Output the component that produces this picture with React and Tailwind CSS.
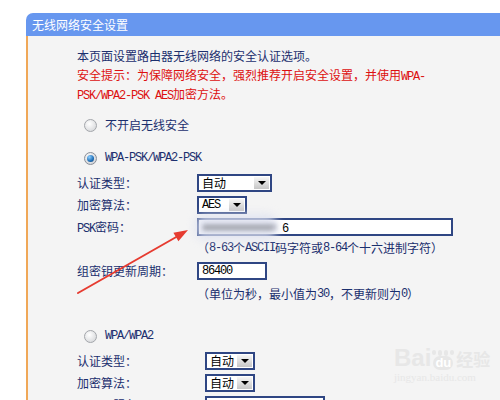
import React from 'react';

const Lat = ({ children }) => (
  <span className="font-['Liberation_Mono',monospace] text-[12px] leading-none tracking-[-1.2px]">{children}</span>
);

const Radio = ({ checked }) =>
  checked ? (
    <span className="flex h-[13px] w-[13px] items-center justify-center rounded-full border border-[#8a8f98] bg-[radial-gradient(circle_at_40%_35%,#ffffff,#c4c7cc)]">
      <span className="h-[7px] w-[7px] rounded-full bg-[radial-gradient(circle_at_35%_30%,#8fd0ff,#1f6fb8_60%,#0d3a6e)]" />
    </span>
  ) : (
    <span className="h-[13px] w-[13px] rounded-full border border-[#a3a6ab] bg-[radial-gradient(circle_at_40%_35%,#ffffff,#cfd1d4)]" />
  );

const Select = ({ value, w }) => (
  <div className={`flex h-[18px] border-2 border-[#2f4683] bg-white ${w}`}>
    <div className="flex flex-1 items-center pl-[3px] leading-[14px] text-black">{value}</div>
    <div className="m-px flex w-[15px] items-center justify-center bg-[linear-gradient(#f6f6f6,#c6c6c6)]">
      <div className="border-x-[4px] border-t-[4px] border-x-transparent border-t-black" />
    </div>
  </div>
);

const Row = ({ label, lw, children, className = '' }) => (
  <div className={`flex h-[22px] items-center ${className}`}>
    <div className={lw}>{label}</div>
    {children}
  </div>
);

export default function App() {
  return (
    <div className="relative h-[400px] overflow-hidden bg-white pl-[26px] pt-[13px] font-['Noto_Sans_CJK_SC',sans-serif] text-[12px]">
      <div className="flex flex-col">
        <div className="h-[23px] rounded-tl-[7px] bg-[#6797ef] pl-[6px] leading-[23px] text-white">无线网络安全设置</div>
        <div className="h-[500px] border-l-2 border-[#f0a858] bg-[#f4f4f4] pl-[49px] pt-[10px] text-[#1b2f6e]">
          <div className="leading-[19px]">
            <div>本页面设置路由器无线网络的安全认证选项。</div>
            <div className="text-[#dd1010]">
              安全提示：为保障网络安全，强烈推荐开启安全设置，并使用<Lat>WPA-</Lat>
              <br />
              <Lat>PSK/WPA2-PSK AES</Lat>加密方法。
            </div>
          </div>

          <div className="mt-[11px] flex h-[22px] items-center gap-[8px] pl-[7px]">
            <Radio />
            <span>不开启无线安全</span>
          </div>
          <div className="mt-[11px] flex h-[22px] items-center gap-[8px] pl-[7px]">
            <Radio checked />
            <Lat>WPA-PSK/WPA2-PSK</Lat>
          </div>

          <Row label="认证类型：" lw="w-[120px]" className="mt-[3px]">
            <Select value="自动" w="w-[75px]" />
          </Row>
          <Row label="加密算法：" lw="w-[120px]">
            <Select value={<Lat>AES</Lat>} w="w-[50px]" />
          </Row>
          <Row label={<><Lat>PSK</Lat>密码：</>} lw="w-[120px]">
            <div className="relative flex h-[18px] w-[256px] items-center border-2 border-[#2f4683] bg-white pl-[5px]">
              <div className="h-[6px] w-[72px] bg-[#9a9ca4] blur-[2px]" />
              <span className="ml-[6px] text-black">
                <Lat>6</Lat>
              </span>
              <div className="absolute left-[-4px] top-[-6px] h-[26px] w-[82px] rounded-[10px] bg-[#dde1f0]/80 blur-[4px]" />
              <div className="absolute left-[4px] top-[5px] h-[5px] w-[70px] bg-[#a6a8b0] blur-[2px]" />
            </div>
          </Row>
          <div className="flex h-[20px] items-center pl-[120px]">
            （<Lat>8-63</Lat>个<Lat>ASCII</Lat>码字符或<Lat>8-64</Lat>个十六进制字符）
          </div>
          <Row label="组密钥更新周期：" lw="w-[120px]" className="mt-[2px]">
            <div className="flex h-[18px] w-[70px] items-center border-2 border-[#2f4683] bg-white pl-[3px] text-black">
              <Lat>86400</Lat>
            </div>
          </Row>
          <div className="mt-[2px] flex h-[20px] items-center pl-[120px]">
            （单位为秒，最小值为<Lat>30</Lat>，不更新则为<Lat>0</Lat>）
          </div>

          <div className="mt-[21px] flex h-[22px] items-center gap-[8px] pl-[7px]">
            <Radio />
            <Lat>WPA/WPA2</Lat>
          </div>
          <Row label="认证类型：" lw="w-[128px]" className="mt-[3px]">
            <Select value="自动" w="w-[50px]" />
          </Row>
          <Row label="加密算法：" lw="w-[128px]">
            <Select value="自动" w="w-[50px]" />
          </Row>
          <Row label={<><Lat>Radius</Lat>服务器<Lat>IP</Lat>：</>} lw="w-[128px]">
            <div className="h-[18px] w-[120px] border-2 border-[#2f4683] bg-white" />
          </Row>
        </div>
      </div>

      <svg className="pointer-events-none absolute left-0 top-0" width="500" height="400">
        <line x1="78" y1="293" x2="178" y2="236" stroke="#e63b30" strokeWidth="2" strokeLinecap="round" />
        <polygon points="188,230 178.4,241.3 173.4,232.7" fill="#e63b30" />
      </svg>

      <div className="pointer-events-none absolute left-[394px] top-[346px] flex flex-col items-start text-[#e7e7e7]">
        <div className="flex items-end">
          <span className="font-['Liberation_Sans',sans-serif] text-[24px] font-bold leading-[24px]">Bai</span>
          <span className="relative ml-[1px] flex flex-col items-center">
            <span className="flex gap-[2px]">
              <span className="h-[5px] w-[4px] rounded-full bg-[#e7e7e7]" />
              <span className="h-[6px] w-[4px] rounded-full bg-[#e7e7e7]" />
              <span className="h-[6px] w-[4px] rounded-full bg-[#e7e7e7]" />
              <span className="h-[5px] w-[4px] rounded-full bg-[#e7e7e7]" />
            </span>
            <span className="rounded-[7px] bg-[#e7e7e7] px-[2px] font-['Liberation_Sans',sans-serif] text-[13px] font-bold leading-[14px] text-white">du</span>
          </span>
          <span className="ml-[2px] text-[17px] font-bold leading-[22px]">经验</span>
        </div>
        <span className="mt-[1px] font-['Liberation_Serif',serif] text-[11px] leading-[12px]">jingyan.baidu.com</span>
      </div>
    </div>
  );
}
